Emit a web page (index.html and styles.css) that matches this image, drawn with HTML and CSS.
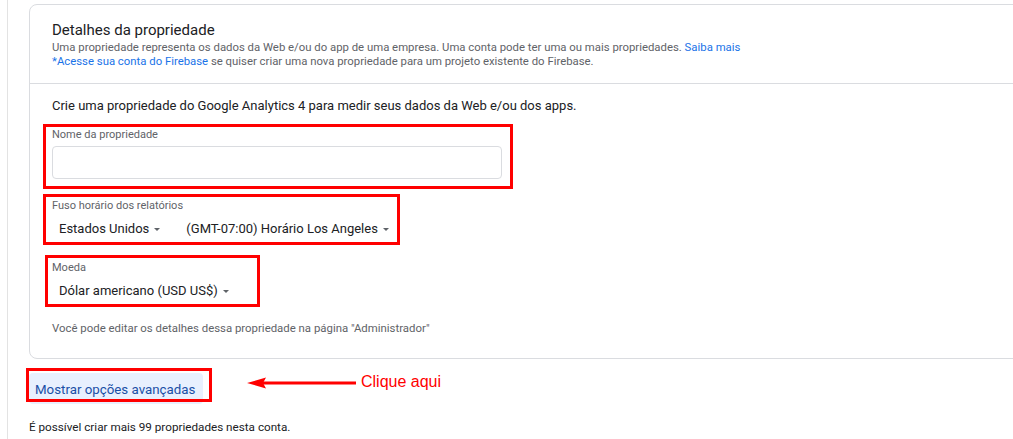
FILE: index.html
```html
<!DOCTYPE html>
<html lang="pt-BR">
<head>
<meta charset="utf-8">
<title>Detalhes da propriedade</title>
<link rel="stylesheet" href="styles.css">
</head>
<body>
<div class="page">
  <div class="rail">
    <section class="card">
      <div class="card-head">
        <h2 class="title">Detalhes da propriedade</h2>
        <p class="desc">Uma propriedade representa os dados da Web e/ou do app de uma empresa. Uma conta pode ter uma ou mais propriedades. <a class="link" href="#">Saiba mais</a></p>
        <p class="desc"><a class="link" href="#">*Acesse sua conta do Firebase</a> se quiser criar uma nova propriedade para um projeto existente do Firebase.</p>
      </div>
      <div class="card-body">
        <p class="intro">Crie uma propriedade do Google Analytics 4 para medir seus dados da Web e/ou dos apps.</p>

        <div class="mark mark-name">
          <div class="label">Nome da propriedade</div>
          <div class="input"></div>
        </div>

        <div class="mark mark-tz">
          <div class="label">Fuso horário dos relatórios</div>
          <div class="selects">
            <span class="select">Estados Unidos<i class="caret"></i></span>
            <span class="select">(GMT-07:00) Horário Los Angeles<i class="caret"></i></span>
          </div>
        </div>

        <div class="mark mark-cur">
          <div class="label">Moeda</div>
          <div class="selects">
            <span class="select">Dólar americano (USD US$)<i class="caret"></i></span>
          </div>
        </div>

        <p class="note">Você pode editar os detalhes dessa propriedade na página "Administrador"</p>
      </div>
    </section>

    <div class="action-row">
      <button class="adv-btn" type="button">Mostrar opções avançadas</button>
      <div class="hint">
        <svg class="arrow" width="109" height="12" viewBox="0 0 109 12" aria-hidden="true">
          <path d="M0 6 L19 0.5 L16 6 L19 11.5 Z" fill="#ff0000"/>
          <rect x="15" y="4.5" width="94" height="3" fill="#ff0000"/>
        </svg>
        <span class="hint-text">Clique aqui</span>
      </div>
    </div>

    <p class="footer">É possível criar mais 99 propriedades nesta conta.</p>
  </div>
</div>
</body>
</html>
```

FILE: styles.css
```css
html, body {
  margin: 0;
  padding: 0;
  background: #ffffff;
  overflow: hidden;
}

body {
  font-family: Roboto, "Liberation Sans", Arial, sans-serif;
  color: #202124;
  width: 1013px;
  height: 439px;
}

.page {
  padding-left: 7px;
  height: 439px;
  box-sizing: border-box;
}

.rail {
  border-left: 1px solid #e3e3e3;
  height: 100%;
  padding-left: 21px;
  padding-top: 4px;
  box-sizing: border-box;
}

.card {
  width: 1010px;
  border: 1px solid #dadce0;
  border-radius: 8px;
  box-sizing: border-box;
}

.card-head {
  padding: 15px 22px 15px 22px;
  border-bottom: 1px solid #dadce0;
}

.title {
  margin: 0;
  font-size: 15px;
  font-weight: 400;
  line-height: 20px;
  color: #202124;
}

.desc {
  margin: 0;
  font-size: 11.35px;
  line-height: 14px;
  color: #5f6368;
}

.link {
  color: #1a73e8;
  text-decoration: none;
}

.card-body {
  padding: 14px 22px 23px 22px;
}

.intro {
  margin: 0 0 10px 0;
  font-size: 13px;
  line-height: 16px;
  color: #202124;
}

.mark {
  border: 3px solid #ff0000;
  box-sizing: border-box;
}

.label {
  font-size: 11px;
  line-height: 14px;
  color: #5f6368;
  padding-top: 1px;
}

.mark-name {
  width: 470px;
  margin-left: -9px;
  padding: 0 8px 7px 6px;
}

.input {
  margin-top: 4px;
  height: 33px;
  border: 1px solid #dadce0;
  border-radius: 4px;
  box-sizing: border-box;
}

.mark-tz {
  width: 357px;
  margin-top: 5px;
  margin-left: -9px;
  padding: 1px 0 3px 6px;
}

.mark-cur {
  width: 215px;
  margin-top: 10px;
  margin-left: -7px;
  padding: 2px 0 3px 4px;
}

.selects {
  display: flex;
  gap: 26px;
  margin-top: 6px;
  padding-left: 7px;
}

.select {
  display: inline-flex;
  align-items: center;
  gap: 5px;
  font-size: 13px;
  line-height: 20px;
  color: #202124;
}

.caret {
  width: 0;
  height: 0;
  border-left: 3.5px solid transparent;
  border-right: 3.5px solid transparent;
  border-top: 3.5px solid #5f6368;
  margin-top: 1px;
}

.note {
  margin: 14px 0 0 0;
  font-size: 11.4px;
  line-height: 14px;
  color: #5f6368;
}

.action-row {
  display: flex;
  align-items: flex-start;
  margin-top: 14px;
}

.adv-btn {
  position: relative;
  width: 174px;
  height: 31px;
  padding: 2px 0 0 6px;
  border: none;
  border-radius: 4px;
  background: #e8f0fe;
  color: #1a4fa6;
  font-family: Roboto, "Liberation Sans", Arial, sans-serif;
  font-size: 13.3px;
  font-weight: 400;
  text-align: left;
  box-sizing: border-box;
}

.adv-btn::after {
  content: "";
  position: absolute;
  left: -3px;
  top: -5px;
  width: 186px;
  height: 34px;
  border: 3px solid #ff0000;
  box-sizing: border-box;
}

.hint {
  display: flex;
  align-items: center;
  height: 20px;
  margin-left: 44px;
  gap: 5px;
}

.arrow {
  display: block;
}

.hint-text {
  font-family: "Liberation Sans", Arial, sans-serif;
  font-size: 16px;
  line-height: 20px;
  color: #ff0000;
  margin-top: -3px;
}

.footer {
  margin: 15px 0 0 0;
  font-size: 11.7px;
  line-height: 16px;
  color: #202124;
}
```
